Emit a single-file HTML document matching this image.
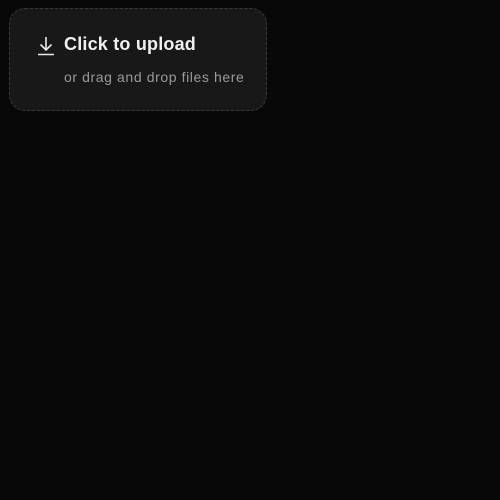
<!DOCTYPE html>
<html><head><style>
html,body{margin:0;padding:0;background:#080808;width:500px;height:500px;overflow:hidden}
.box{position:absolute;left:9px;top:8px;width:256px;height:101px;border:1px dashed #3a3a3a;border-radius:16px;background:#181818;font-family:"Liberation Sans","DejaVu Sans",sans-serif}
.t{position:absolute;left:54px;top:25px;color:#f0f0f0;font-size:18px;font-weight:bold;white-space:nowrap;letter-spacing:0.2px}
.s{position:absolute;left:54px;top:60px;color:#9a9a9a;font-size:14px;white-space:nowrap;letter-spacing:0.6px}
svg{position:absolute;left:27px;top:27px}
</style></head><body>
<div class="box">
<svg width="18" height="20" viewBox="0 0 18 20"><path d="M9 1V14M3.5 8.5L9 14L14.5 8.5M1 18.5H17" stroke="#e8e8e8" stroke-width="1.6" fill="none"/></svg>
<div class="t">Click to upload</div>
<div class="s">or drag and drop files here</div>
</div>
</body></html>
